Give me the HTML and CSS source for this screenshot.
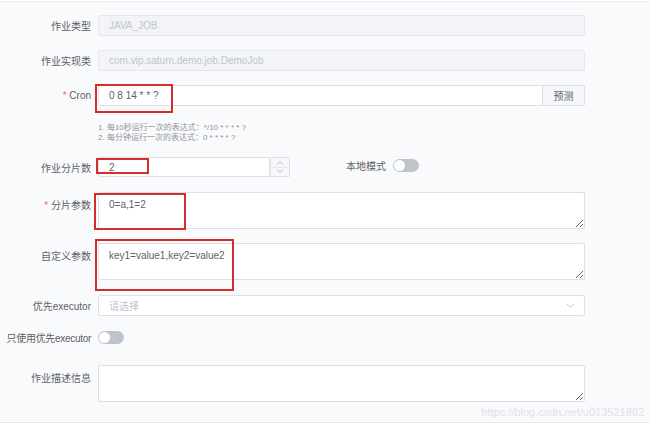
FILE: index.html
```html
<!DOCTYPE html>
<html>
<head>
<meta charset="utf-8">
<link rel="stylesheet" href="styles.css">
</head>
<body>
<div class="page">
  <form class="form">
    <div class="row">
      <label class="lbl">作业类型</label>
      <div class="field"><input class="inp disabled" value="JAVA_JOB" disabled></div>
    </div>
    <div class="row">
      <label class="lbl">作业实现类</label>
      <div class="field"><input class="inp disabled" value="com.vip.saturn.demo.job.DemoJob" disabled></div>
    </div>
    <div class="row">
      <label class="lbl"><span class="req">*</span> Cron</label>
      <div class="field group">
        <input class="inp grow" value="0 8 14 * * ?">
        <span class="append">预测</span>
      </div>
    </div>
    <div class="row hints">
      <div class="lbl"></div>
      <div class="hint">
        <div>1. 每10秒运行一次的表达式：*/10 * * * * ?</div>
        <div>2. 每分钟运行一次的表达式：0 * * * * ?</div>
      </div>
    </div>
    <div class="row r5">
      <label class="lbl">作业分片数</label>
      <div class="num">
        <input class="inp numinp" value="2">
        <span class="spin">
          <span class="sp"><svg width="8" height="5" viewBox="0 0 8 5"><path d="M1 4.5 L4 1.5 L7 4.5" fill="none" stroke="#a8abb2" stroke-width="0.9"/></svg></span>
          <span class="sp sp2"><svg width="8" height="5" viewBox="0 0 8 5"><path d="M1 0.5 L4 3.5 L7 0.5" fill="none" stroke="#a8abb2" stroke-width="0.9"/></svg></span>
        </span>
      </div>
      <div class="local">
        <span class="lbl2">本地模式</span>
        <span class="switch"><span class="knob"></span></span>
      </div>
    </div>
    <div class="row tall r6">
      <label class="lbl"><span class="req">*</span> 分片参数</label>
      <div class="field"><textarea class="ta">0=a,1=2</textarea></div>
    </div>
    <div class="row tall">
      <label class="lbl">自定义参数</label>
      <div class="field"><textarea class="ta">key1=value1,key2=value2</textarea></div>
    </div>
    <div class="row r8">
      <label class="lbl">优先executor</label>
      <div class="field select">
        <span class="ph">请选择</span>
        <svg width="9" height="6" viewBox="0 0 9 6"><path d="M1 1 L4.5 4.5 L8 1" fill="none" stroke="#c0c4cc" stroke-width="0.9"/></svg>
      </div>
    </div>
    <div class="row sw">
      <label class="lbl tight">只使用优先executor</label>
      <span class="switch"><span class="knob"></span></span>
    </div>
    <div class="row tall r10">
      <label class="lbl">作业描述信息</label>
      <div class="field"><textarea class="ta"></textarea></div>
    </div>

    <span class="mark m1"></span>
    <span class="mark m2"></span>
    <span class="mark m3"></span>
    <span class="mark m4"></span>
  </form>
  <div class="wm">https://blog.csdn.net/u013521882</div>
</div>
</body>
</html>
```

FILE: styles.css
```css
* { box-sizing: border-box; }
html, body { margin: 0; padding: 0; }
body {
  width: 650px;
  height: 427px;
  overflow: hidden;
  background: #ffffff;
  font-family: "Liberation Sans", "Noto Sans CJK SC", sans-serif;
  font-size: 10px;
  color: #606266;
}
.page {
  position: relative;
  height: 422px;
  background: #f9fafc;
  border-top: 1px solid #e9ebef;
  border-bottom: 1px solid #e4e7ec;
  margin-top: 1px;
}
.form {
  position: relative;
  display: flex;
  flex-direction: column;
  gap: 14px;
  padding-top: 13px;
}
.row {
  display: flex;
  align-items: center;
  height: 21px;
}
.row.tall { height: 37px; align-items: flex-start; }
.row.tall .lbl { padding-top: 5px; }
.row.hints { height: 22px; align-items: flex-start; }
.row.r5 { height: 20px; margin-top: 1px; }
.row.r6 { margin-top: 1px; }
.row.r8 { margin-top: 1px; }
.row.sw { height: 21px; margin-top: -3px; }
.row.r10 { margin-top: 3px; }
.lbl {
  width: 91px;
  flex: none;
  text-align: right;
  margin-right: 7px;
  font-size: 10px;
  color: #5c5f66;
  white-space: nowrap;
}
.lbl.tight { letter-spacing: -0.3px; }
.req { color: #f56c6c; }
.field { width: 487px; height: 100%; }
.inp {
  width: 100%;
  height: 100%;
  border: 1px solid #dcdfe6;
  background: #fff;
  padding: 0 10px;
  font: inherit;
  font-size: 10px;
  color: #606266;
  outline: none;
  border-radius: 2px;
}
.inp.disabled {
  background: #f3f4f7;
  border-color: #e4e7ed;
  color: #c0c4cc;
}
.group { display: flex; }
.group .inp.grow { flex: 1; border-radius: 2px 0 0 2px; }
.append {
  width: 42px;
  flex: none;
  display: flex;
  align-items: center;
  justify-content: center;
  background: #f5f7fa;
  border: 1px solid #dcdfe6;
  border-left: none;
  border-radius: 0 2px 2px 0;
  color: #606266;
}
.hint {
  font-size: 8px;
  line-height: 10px;
  color: #909399;
  padding-top: 3px;
}
.num {
  position: relative;
  width: 192px;
  height: 20px;
  display: flex;
}
.num .numinp { flex: 1; border-radius: 2px 0 0 2px; }
.spin {
  width: 20px;
  display: flex;
  flex-direction: column;
  border: 1px solid #dcdfe6;
  border-left: 1px solid #e4e7ed;
  border-radius: 0 2px 2px 0;
  background: #f5f7fa;
}
.sp {
  flex: 1;
  display: flex;
  align-items: center;
  justify-content: center;
}
.sp2 { border-top: 1px solid #e4e7ed; }
.local {
  display: flex;
  align-items: center;
  margin-left: 56px;
  margin-top: -4px;
}
.lbl2 { margin-right: 7px; color: #5c5f66; }
.switch {
  display: inline-block;
  position: relative;
  width: 26px;
  height: 13px;
  border-radius: 7px;
  background: #bfc4cc;
}
.knob {
  position: absolute;
  left: 1px;
  top: 1px;
  width: 11px;
  height: 11px;
  border-radius: 50%;
  background: #fff;
}
.ta {
  display: block;
  width: 100%;
  height: 100%;
  border: 1px solid #dcdfe6;
  background: #fff;
  padding: 5px 10px;
  font: inherit;
  font-size: 10px;
  line-height: 14px;
  color: #606266;
  border-radius: 2px;
  outline: none;
}
.select {
  display: flex;
  align-items: center;
  justify-content: space-between;
  border: 1px solid #dcdfe6;
  background: #fff;
  border-radius: 2px;
  padding: 0 9px 0 10px;
  height: 21px;
}
.ph { color: #c0c4cc; }
.mark {
  position: absolute;
  border: 2px solid #d42d2d;
}
.m1 { left: 95px; top: 82px; width: 78px; height: 29px; }
.m2 { left: 96px; top: 156px; width: 53px; height: 16px; }
.m3 { left: 94px; top: 191px; width: 92px; height: 37px; }
.m4 { left: 95px; top: 237px; width: 139px; height: 52px; }
.wm {
  position: absolute;
  right: 6px;
  bottom: 4px;
  font-size: 11px;
  color: #e0e3e8;
}
```
